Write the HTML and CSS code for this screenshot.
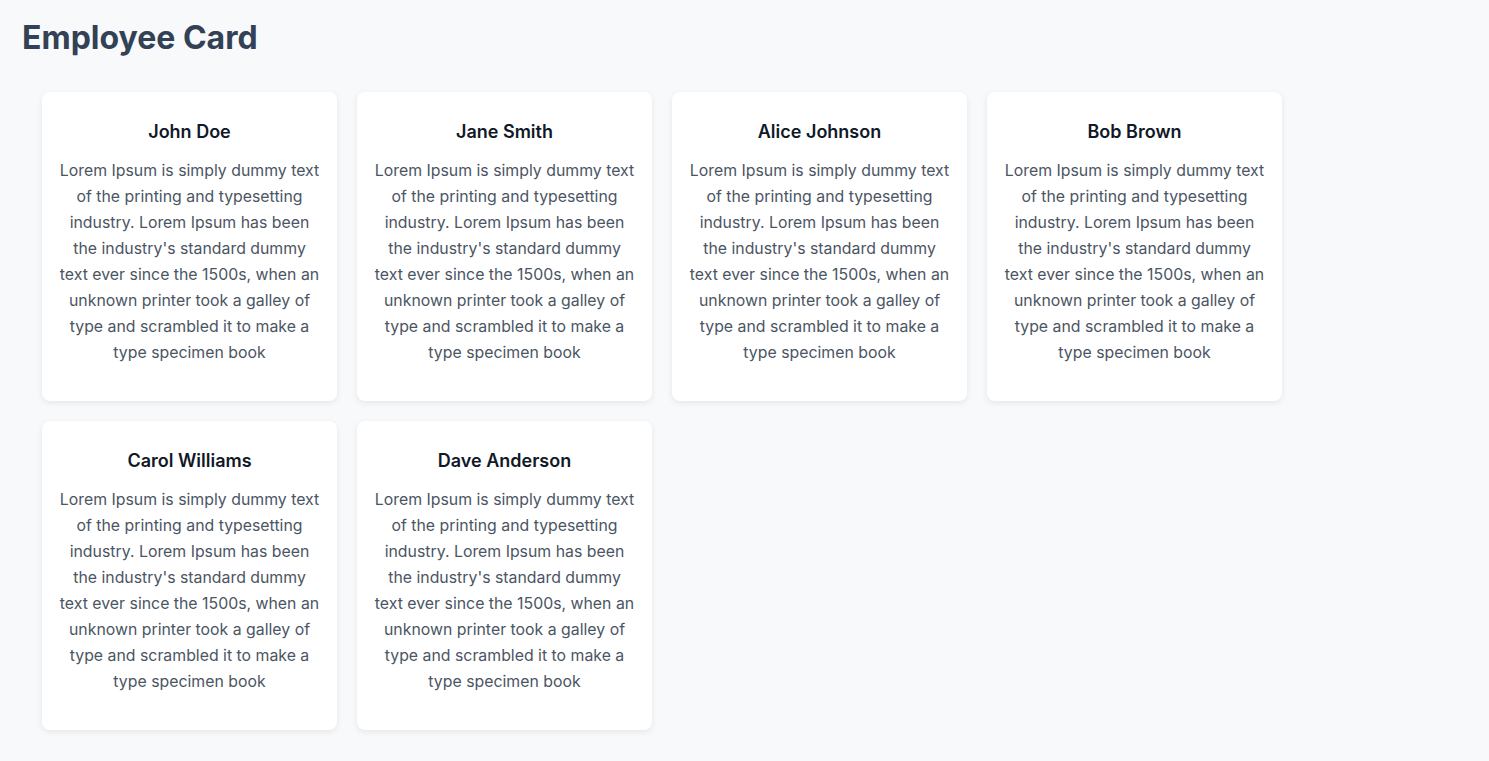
FILE: index.html
```html
<!DOCTYPE html>
<html lang="en">
<head>
<meta charset="utf-8">
<title>Employee Card</title>
<link rel="stylesheet" href="styles.css">
</head>
<body>
<main class="page">
  <h1 class="title">Employee Card</h1>
  <div class="grid">
    <div class="card"><h2 class="name">John Doe</h2><p class="desc">Lorem Ipsum is simply dummy text of the printing and typesetting industry. Lorem Ipsum has been the industry's standard dummy text ever since the 1500s, when an unknown printer took a galley of type and scrambled it to make a type specimen book</p></div>
    <div class="card"><h2 class="name">Jane Smith</h2><p class="desc">Lorem Ipsum is simply dummy text of the printing and typesetting industry. Lorem Ipsum has been the industry's standard dummy text ever since the 1500s, when an unknown printer took a galley of type and scrambled it to make a type specimen book</p></div>
    <div class="card"><h2 class="name">Alice Johnson</h2><p class="desc">Lorem Ipsum is simply dummy text of the printing and typesetting industry. Lorem Ipsum has been the industry's standard dummy text ever since the 1500s, when an unknown printer took a galley of type and scrambled it to make a type specimen book</p></div>
    <div class="card"><h2 class="name">Bob Brown</h2><p class="desc">Lorem Ipsum is simply dummy text of the printing and typesetting industry. Lorem Ipsum has been the industry's standard dummy text ever since the 1500s, when an unknown printer took a galley of type and scrambled it to make a type specimen book</p></div>
    <div class="card"><h2 class="name">Carol Williams</h2><p class="desc">Lorem Ipsum is simply dummy text of the printing and typesetting industry. Lorem Ipsum has been the industry's standard dummy text ever since the 1500s, when an unknown printer took a galley of type and scrambled it to make a type specimen book</p></div>
    <div class="card"><h2 class="name">Dave Anderson</h2><p class="desc">Lorem Ipsum is simply dummy text of the printing and typesetting industry. Lorem Ipsum has been the industry's standard dummy text ever since the 1500s, when an unknown printer took a galley of type and scrambled it to make a type specimen book</p></div>
  </div>
</main>
</body>
</html>
```
FILE: styles.css
```css
html, body {
  margin: 0;
  padding: 0;
  background: #f8f9fb;
  font-family: Inter, "Noto Sans", sans-serif;
}
.page {
  padding: 18px 22px;
}
.title {
  margin: 0 0 34px 0;
  font-size: 32px;
  line-height: 40px;
  font-weight: 700;
  color: #334155;
}
.grid {
  display: grid;
  grid-template-columns: repeat(4, 295px);
  gap: 20px;
  padding: 0 20px;
}
.card {
  background: #ffffff;
  border-radius: 8px;
  box-shadow: 0 2px 6px rgba(0, 0, 0, 0.08);
  padding: 26px 17px 23px;
  text-align: center;
}
.name {
  margin: 0;
  font-size: 18px;
  line-height: 28px;
  font-weight: 600;
  color: #111827;
}
.desc {
  margin: 12px 0 12px 0;
  font-size: 15.85px;
  line-height: 26px;
  color: #4b5563;
}
```
